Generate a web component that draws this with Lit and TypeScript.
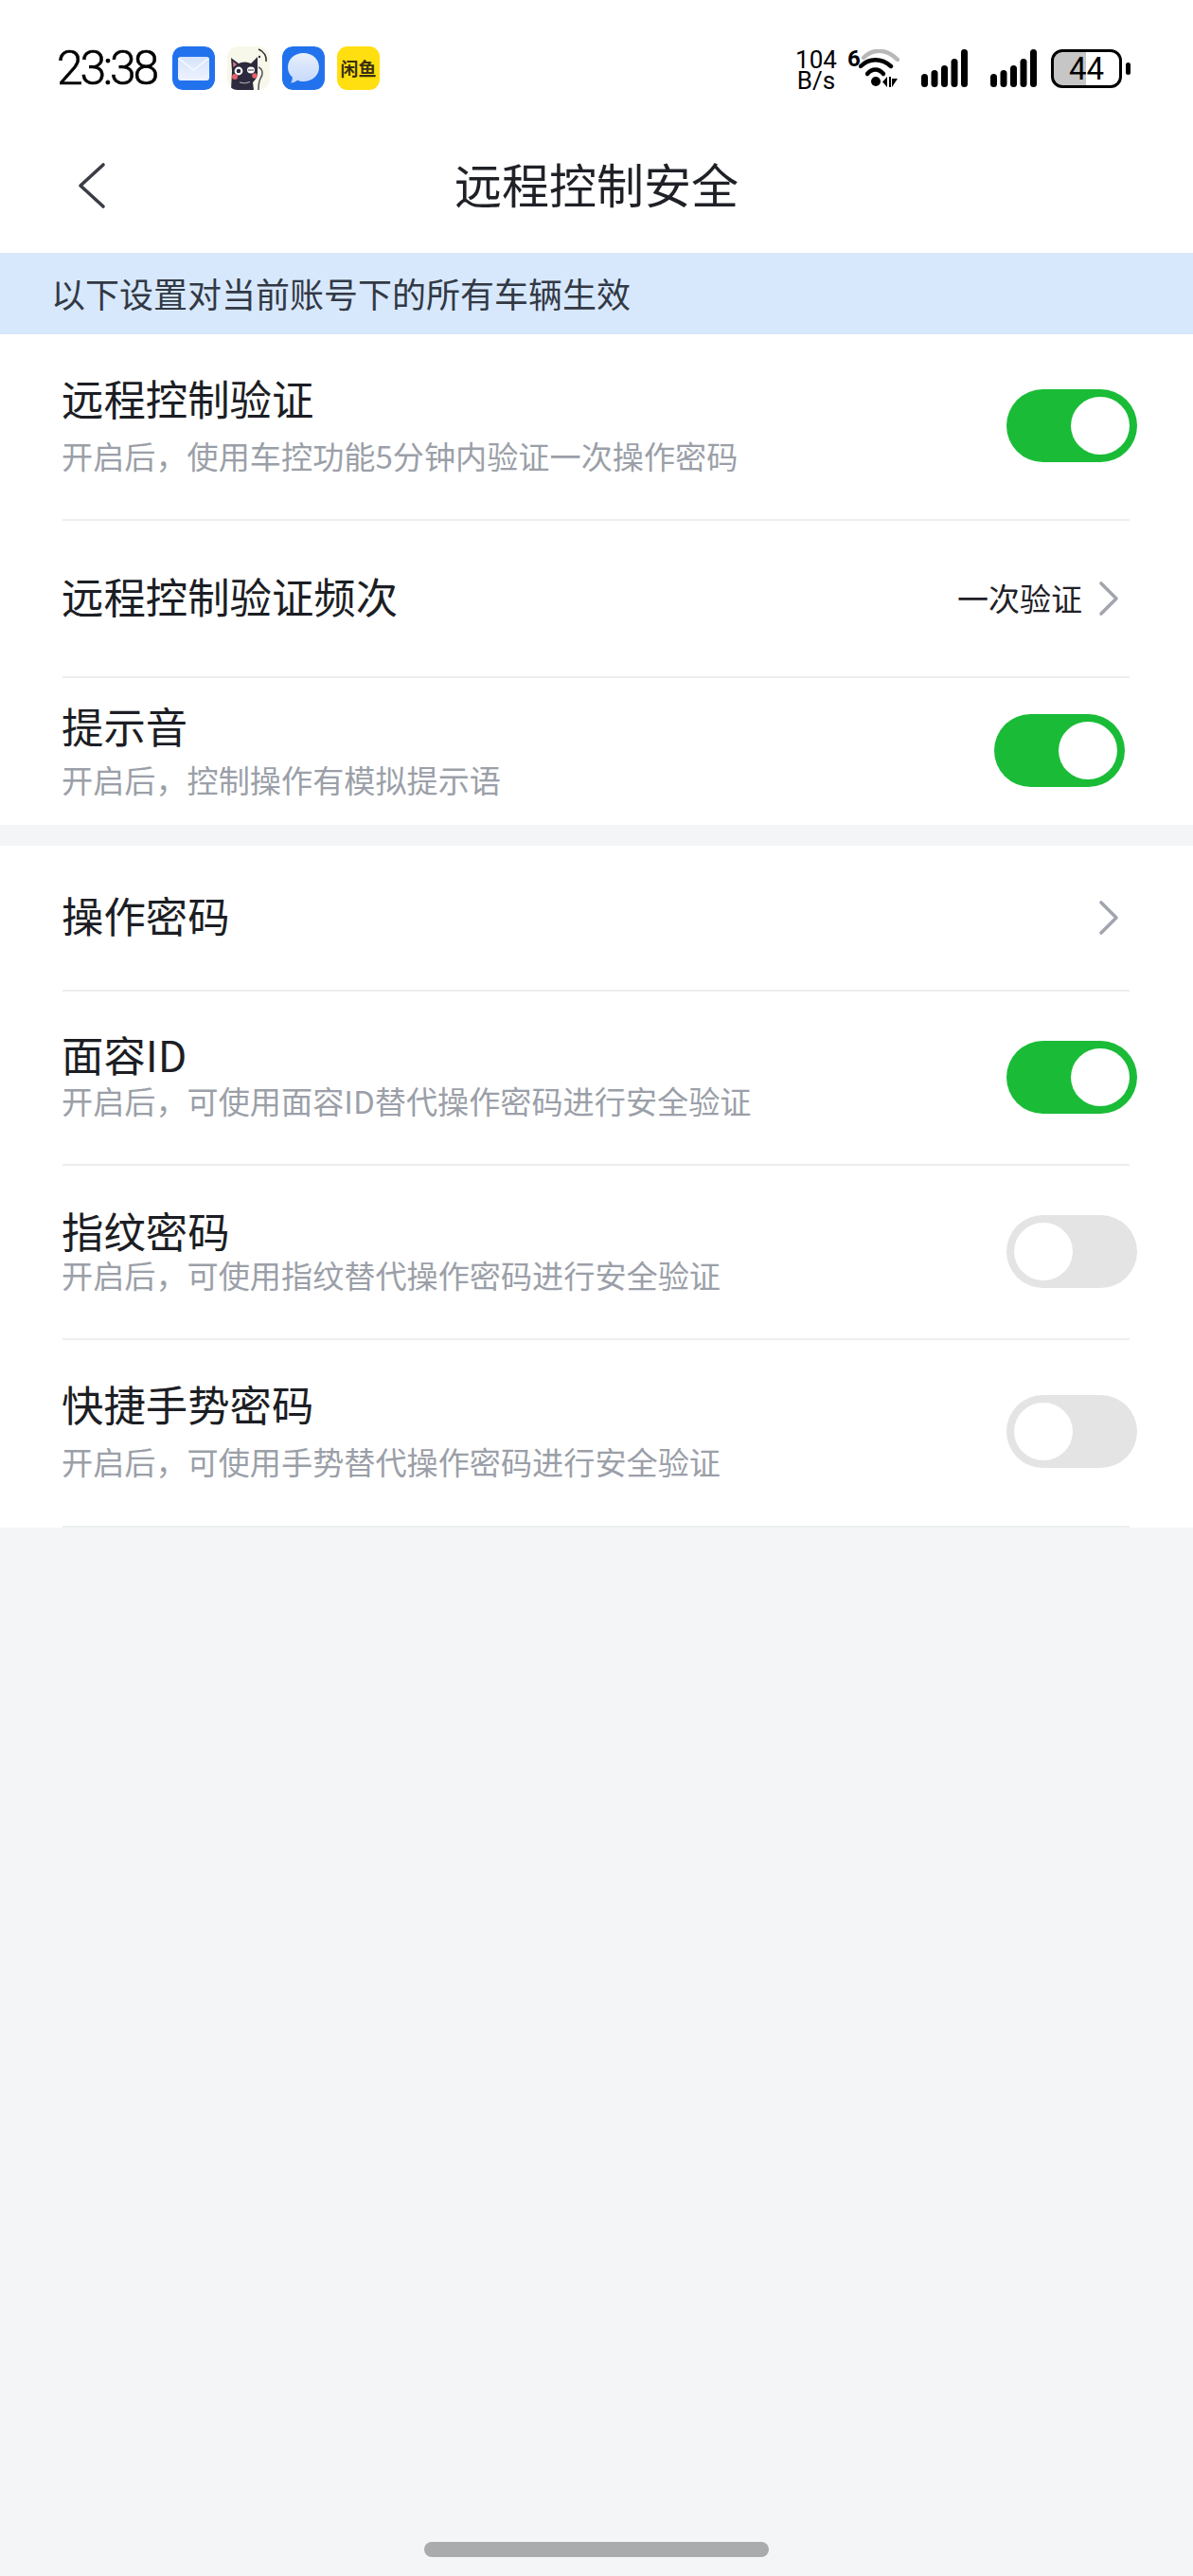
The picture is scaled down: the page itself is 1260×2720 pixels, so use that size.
import { LitElement, html, css, svg } from "lit";
import { customElement } from "lit/decorators.js";

type Row = { cls: string; title: string; sub?: string; on?: boolean; value?: string; chevron?: boolean };

const section1: Row[] = [
  { cls: "r1", title: "远程控制验证", sub: "开启后，使用车控功能5分钟内验证一次操作密码", on: true },
  { cls: "r2", title: "远程控制验证频次", value: "一次验证", chevron: true },
  { cls: "r3", title: "提示音", sub: "开启后，控制操作有模拟提示语", on: true },
];
const section2: Row[] = [
  { cls: "r4", title: "操作密码", chevron: true },
  { cls: "r5", title: "面容ID", sub: "开启后，可使用面容ID替代操作密码进行安全验证", on: true },
  { cls: "r6", title: "指纹密码", sub: "开启后，可使用指纹替代操作密码进行安全验证", on: false },
  { cls: "r7", title: "快捷手势密码", sub: "开启后，可使用手势替代操作密码进行安全验证", on: false },
];

const signal = svg`<svg class="signal" viewBox="0 0 49 40" width="49" height="40">
  <g fill="#000">
    <rect x="0" y="26" width="7" height="14" rx="3.5"/>
    <rect x="10.5" y="22" width="7" height="18" rx="3.5"/>
    <rect x="21" y="17" width="7" height="23" rx="3.5"/>
    <rect x="31.5" y="10" width="7" height="30" rx="3.5"/>
    <rect x="42" y="0" width="7" height="40" rx="3.5"/>
  </g></svg>`;

@customElement("app-root")
export class AppRoot extends LitElement {
  static styles = css`
    :host {
      display: block;
      width: 1260px;
      height: 2720px;
      background: #f4f5f7;
      font-family: "Noto Sans CJK SC", "Noto Sans", sans-serif;
      position: relative;
      overflow: hidden;
    }
    .top { background: #fff; height: 267px; display: flex; flex-direction: column; }
    .status { display: flex; align-items: flex-start; height: 152px; padding: 49px 0 0 60px; box-sizing: border-box; }
    .time {
      font-family: Roboto, sans-serif; font-size: 50px; line-height: 46px; width: 122px; color: #000;
      letter-spacing: -3.3px; font-weight: 300; -webkit-text-stroke: 0.6px #000;
    }
    .apps { display: flex; gap: 13px; }
    .app { width: 45px; height: 46px; border-radius: 11px; display: block; }
    .yellow {
      background: #ffdf0f; display: flex; align-items: center; justify-content: center;
      font-size: 19px; font-weight: 700; color: #3a3010; letter-spacing: 0; line-height: 46px; white-space: nowrap;
    }
    .right { margin-left: auto; display: flex; align-items: flex-start; margin-right: 66px; margin-top: 3px; }
    .speed {
      width: 56px; margin-right: 5px; font-family: Roboto, sans-serif; font-size: 26px; line-height: 22px; text-align: center; color: #000;
      display: flex; flex-direction: column; align-items: center;
    }
    .six { font-family: Roboto, sans-serif; font-weight: 700; font-size: 24px; line-height: 20px; width: 12px; color: #000; }
    .wifi { display: block; margin-right: 23px; }
    .signal { display: block; margin-right: 24px; }
    .sigb .signal { margin-right: 15px; }
    .batt { display: flex; align-items: center; }
    .battbox {
      width: 75px; height: 41px; box-sizing: border-box; border: 3.5px solid #000; border-radius: 12px; overflow: hidden;
      display: flex; align-items: center; justify-content: center;
      background: linear-gradient(90deg, #c6c6c6 0 50%, #fff 50% 100%);
      font-family: Roboto, sans-serif; font-size: 33px; font-weight: 400; color: #000; line-height: 34px;
    }
    .nub { width: 5px; height: 13px; border-radius: 2.5px; background: #000; margin-left: 4px; }
    .nav { height: 115px; position: relative; display: flex; align-items: center; justify-content: center; }
    .nav .back { position: absolute; left: 82px; top: 19px; }
    .nav .ttl { font-size: 50px; line-height: 60px; color: #1f2127; margin-top: -33px; font-weight: 400; }
    .banner {
      height: 86px; background: #d8e8fc; color: #323945; font-size: 36px; line-height: 84px; padding-left: 54px;
    }
    .section { background: #fff; }
    .section + .section { margin-top: 22px; }
    .row {
      margin: 0 67px 0 66px; box-sizing: border-box; display: flex; align-items: center;
      border-bottom: 2px solid #eceef0;
    }
    .text { align-self: flex-start; flex: 1; min-width: 0; margin-left: -1px; }
    .title { font-size: 44.4px; line-height: 50px; color: #1c1e24; }
    .sub { font-size: 33.15px; line-height: 40px; color: #9b9fa8; white-space: nowrap; }
    .toggle {
      width: 138px; height: 77px; border-radius: 39px; position: relative; flex: none; margin-right: -8px;
    }
    .toggle.on { background: #1abc37; }
    .toggle.off { background: #e4e4e4; }
    .knob { position: absolute; top: 8px; width: 62px; height: 61px; border-radius: 50%; background: #fff; }
    .on .knob { right: 8px; }
    .off .knob { left: 8px; }
    .value { font-size: 33px; line-height: 40px; color: #1f2127; margin-right: 17px; margin-bottom: 3px; }
    .chev { display: block; flex: none; margin-right: 11px; }

    .r1 { height: 197px; }
    .r1 .text { padding-top: 42px; }
    .r1 .sub { margin-top: 16px; }
    .r1 .toggle { margin-bottom: 2px; }

    .r2 { height: 166px; }
    .r2 .text { align-self: center; margin-bottom: 6px; }

    .r3 { height: 155px; border-bottom: none; }
    .r3 .text { padding-top: 25px; }
    .r3 .sub { margin-top: 12px; }
    .r3 .toggle { margin-right: 5px; margin-bottom: 3px; }

    .r4 { height: 154px; }
    .r4 .text { align-self: center; margin-bottom: 6px; }

    .r5 { height: 184px; }
    .r5 .text { padding-top: 41px; }
    .r5 .sub { margin-top: 4px; }
    .r5 .toggle { margin-bottom: 2px; }

    .r6 { height: 184px; }
    .r6 .text { padding-top: 43px; }
    .r6 .sub { margin-top: 2px; }
    .r6 .toggle { margin-bottom: 2px; }

    .r7 { height: 198px; }
    .r7 .text { padding-top: 42px; }
    .r7 .sub { margin-top: 16px; }
    .r7 .toggle { margin-bottom: 4px; }

    .pill { position: absolute; left: 448px; top: 2684px; width: 364px; height: 16px; border-radius: 8px; background: #aaabad; }
  `;

  private row(r: Row) {
    return html`<div class="row ${r.cls}">
      <div class="text">
        <div class="title">${r.title}</div>
        ${r.sub ? html`<div class="sub">${r.sub}</div>` : ""}
      </div>
      ${r.value ? html`<div class="value">${r.value}</div>` : ""}
      ${r.chevron
        ? html`<svg class="chev" width="22" height="38" viewBox="0 0 22 38"><path d="M3 3 L19 19 L3 35" fill="none" stroke="#a2a4ae" stroke-width="3.6" stroke-linecap="round" stroke-linejoin="round"/></svg>`
        : ""}
      ${r.on !== undefined
        ? html`<div class="toggle ${r.on ? "on" : "off"}"><div class="knob"></div></div>`
        : ""}
    </div>`;
  }

  render() {
    return html`
      <div class="top">
        <div class="status">
          <div class="time">23:38</div>
          <div class="apps">
            <svg class="app" viewBox="0 0 45 46">
              <defs>
                <linearGradient id="mail" x1="0" y1="0" x2="0" y2="1"><stop offset="0" stop-color="#d5e3fb"/><stop offset="1" stop-color="#edf3fe"/></linearGradient>
                <linearGradient id="bub" x1="0" y1="0" x2="0" y2="1"><stop offset="0" stop-color="#e8effc"/><stop offset="1" stop-color="#c5d8fb"/></linearGradient>
              </defs>
              <rect width="45" height="46" rx="11" fill="#2272ee"/>
              <rect x="6" y="11" width="33" height="25" rx="3" fill="url(#mail)"/>
              <path d="M6.5 12.5 L22.5 25 L38.5 12.5" fill="none" stroke="#f4f7fe" stroke-width="1.6"/>
            </svg>
            <svg class="app" viewBox="0 0 45 46">
              <rect width="45" height="46" rx="11" fill="#f8f8ea"/>
              <path d="M33 3 C39 5 42 11 41 16" fill="none" stroke="#33303a" stroke-width="1.6"/>
              <circle cx="34" cy="11" r="1.2" fill="#33303a"/>
              <path d="M33 22 C38 24 38 30 35 34 C33 38 33 42 33 46" fill="none" stroke="#5a5860" stroke-width="1.6"/>
              <path d="M4 46 L5 26 L4 12 L12 18 C17 16 21 16 25 18 L32 11 L32 28 C32 33 29 36 27 38 L28 46 Z" fill="#2d2a3d"/>
              <path d="M6 16 L10 19 L6.5 22 Z" fill="#d97a85"/>
              <circle cx="12" cy="26" r="4.4" fill="#fff"/><circle cx="12" cy="26" r="2.3" fill="#2d2a3d"/>
              <ellipse cx="25" cy="25" rx="4" ry="3.4" fill="#fff"/>
              <path d="M22 25 H28" stroke="#2d2a3d" stroke-width="1.2"/>
              <circle cx="8" cy="32" r="3" fill="#e8606c"/><circle cx="29" cy="31" r="2.8" fill="#e8606c"/>
              <path d="M13 38 Q19 40 24 37.5" fill="none" stroke="#bbb" stroke-width="1"/>
            </svg>
            <svg class="app" viewBox="0 0 45 46">
              <rect width="45" height="46" rx="11" fill="#2272ee"/>
              <path d="M22.5 7 C32 7 39 13.5 39 22 C39 30.5 32 37 22.5 37 C20 37 18 36.6 16 35.8 C14 37.6 11.5 38.6 9 38.6 C10.5 36.6 11 34.6 10.8 32.6 C7.8 30 6 26.4 6 22 C6 13.5 13 7 22.5 7 Z" fill="url(#bub)"/>
            </svg>
            <div class="app yellow">闲鱼</div>
          </div>
          <div class="right">
            <div class="speed"><span>104</span><span>B/s</span></div>
            <div class="six">6</div>
            <svg class="wifi" width="43" height="40" viewBox="0 0 43 40">
              <path d="M5 9 C15 -1 29 -1 41 11" fill="none" stroke="#b8b8b8" stroke-width="4.4" stroke-linecap="round"/>
              <path d="M2 18 C11 9 24 9 34 18" fill="none" stroke="#000" stroke-width="4.4" stroke-linecap="round"/>
              <path d="M9 26 C14 20 21 20 26 26" fill="none" stroke="#000" stroke-width="4.4" stroke-linecap="round"/>
              <circle cx="18" cy="34" r="5" fill="#000"/>
              <path d="M30 29 V40 L25 34.5 Z M32 29 H34 V40 H32 Z M35 31 H41 L35 40 Z" fill="#000"/>
            </svg>
            ${signal}
            <div class="sigb">${signal}</div>
            <div class="batt">
              <div class="battbox">44</div>
              <div class="nub"></div>
            </div>
          </div>
        </div>
        <div class="nav">
          <svg class="back" width="30" height="50" viewBox="0 0 30 50"><path d="M27 3 L3 25 L27 47" fill="none" stroke="#3a3d44" stroke-width="3.6" stroke-linecap="round" stroke-linejoin="round"/></svg>
          <div class="ttl">远程控制安全</div>
        </div>
      </div>
      <div class="banner">以下设置对当前账号下的所有车辆生效</div>
      <div class="section">${section1.map((r) => this.row(r))}</div>
      <div class="section">${section2.map((r) => this.row(r))}</div>
      <div class="pill"></div>
    `;
  }
}
